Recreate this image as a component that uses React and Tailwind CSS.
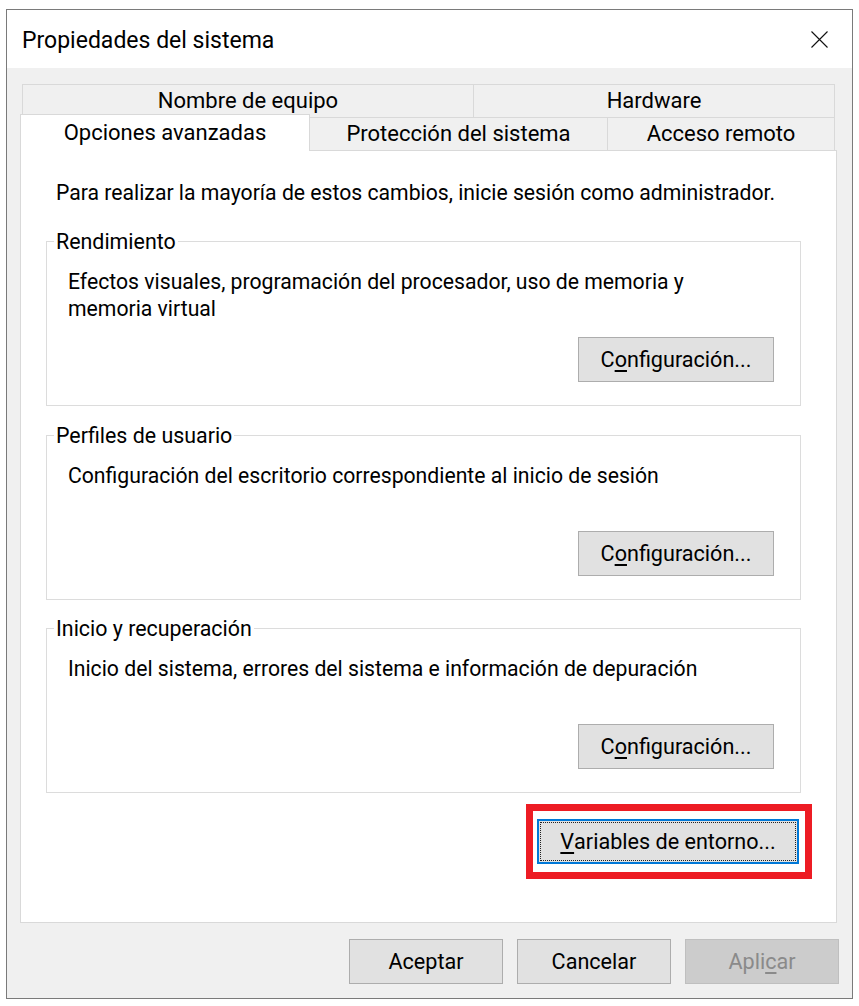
const FONT = { fontFamily: "Roboto, 'Liberation Sans', Arial, sans-serif" };

function CloseIcon() {
  return (
    <svg width="17" height="17" viewBox="0 0 17 17" className="shrink-0">
      <path d="M0.5 0.5 L16.5 16.5 M16.5 0.5 L0.5 16.5" stroke="#111" strokeWidth="1.1" fill="none" />
    </svg>
  );
}

function Tab({ className = "", children }) {
  return (
    <div
      className={
        "h-full flex items-center justify-center border-t border-[#d9d9d9] bg-[#f0f0f0] text-[22px] text-black leading-none " +
        className
      }
    >
      {children}
    </div>
  );
}

function WinButton({ className = "", children, disabled = false }) {
  return (
    <div
      className={
        "h-[45px] flex items-center justify-center border text-[21.6px] leading-none " +
        (disabled
          ? "bg-[#cccccc] border-[#bfbfbf] text-[#8a8a8a] "
          : "bg-[#e1e1e1] border-[#adadad] text-black ") +
        className
      }
    >
      {children}
    </div>
  );
}

function GroupBox({ title, text, className = "" }) {
  return (
    <div
      className={
        "relative ml-[25px] w-[755px] h-[165px] border border-[#dcdcdc] flex flex-col " + className
      }
    >
      <span className="absolute left-[7px] -top-[14px] px-[2px] bg-white text-[21.4px] leading-[27px] text-black">
        {title}
      </span>
      <p className="pl-[21px] pr-[50px] pt-[26px] text-[21.2px] leading-[27px] text-black">{text}</p>
      <WinButton className="mt-auto mb-[23px] self-end mr-[26px] w-[196px]">
        C<span className="underline underline-offset-[3px]">o</span>nfiguración...
      </WinButton>
    </div>
  );
}

export default function App() {
  return (
    <div className="w-[859px] h-[1006px] bg-white pl-[6px] pt-[9px]" style={FONT}>
      <div className="w-[847px] h-[990px] border border-[#7a7a7a] flex flex-col bg-[#f0f0f0]">
        {/* title bar */}
        <div className="h-[58px] shrink-0 bg-white flex items-center pl-[15px] pr-[24px]">
          <span className="text-[23px] text-black leading-none pt-[3px]">Propiedades del sistema</span>
          <div className="ml-auto">
            <CloseIcon />
          </div>
        </div>

        {/* tab control */}
        <div className="ml-[13px] w-[817px] flex flex-col">
          <div className="mt-[16px] mx-[2px] h-[33px] flex">
            <Tab className="w-[451px] border-l">Nombre de equipo</Tab>
            <Tab className="flex-1 border-l border-r">Hardware</Tab>
          </div>
          <div className="h-[33px] flex items-start">
            <div className="relative z-10 -mt-[3px] w-[290px] h-[37px] flex items-center justify-center border-l border-t border-r border-[#d9d9d9] bg-white text-[22px] text-black leading-none pb-[1px]">
              Opciones avanzadas
            </div>
            <Tab className="w-[297px]">Protección del sistema</Tab>
            <Tab className="w-[228px] border-l border-r">Acceso remoto</Tab>
          </div>

          {/* tab page */}
          <div className="h-[773px] border border-[#d9d9d9] bg-white flex flex-col">
            <p className="pl-[35px] pt-[28px] text-[21.2px] leading-[27px] text-black">
              Para realizar la mayoría de estos cambios, inicie sesión como administrador.
            </p>
            <GroupBox
              className="mt-[35px]"
              title="Rendimiento"
              text="Efectos visuales, programación del procesador, uso de memoria y memoria virtual"
            />
            <GroupBox
              className="mt-[29px]"
              title="Perfiles de usuario"
              text="Configuración del escritorio correspondiente al inicio de sesión"
            />
            <GroupBox
              className="mt-[28px]"
              title="Inicio y recuperación"
              text="Inicio del sistema, errores del sistema e información de depuración"
            />

            {/* highlighted environment-variables button */}
            <div className="self-end mt-[11px] mr-[24px] border-[7px] border-[#ed1c24] pl-[4px] pr-[6px] py-[8px]">
              <div className="w-[262px] h-[45px] border-2 border-[#0078d7] bg-[#e1e1e1] p-[1px]">
                <div className="h-full border border-dotted border-[#222] flex items-center justify-center text-[21.6px] leading-none text-black">
                  <span className="underline underline-offset-[3px]">V</span>ariables de entorno...
                </div>
              </div>
            </div>
          </div>
        </div>

        {/* dialog buttons */}
        <div className="mt-[16px] flex justify-end gap-[14px] pr-[13px]">
          <WinButton className="w-[154px]">Aceptar</WinButton>
          <WinButton className="w-[154px]">Cancelar</WinButton>
          <WinButton className="w-[154px]" disabled>
            Apli<span className="underline underline-offset-[3px]">c</span>ar
          </WinButton>
        </div>
      </div>
    </div>
  );
}
